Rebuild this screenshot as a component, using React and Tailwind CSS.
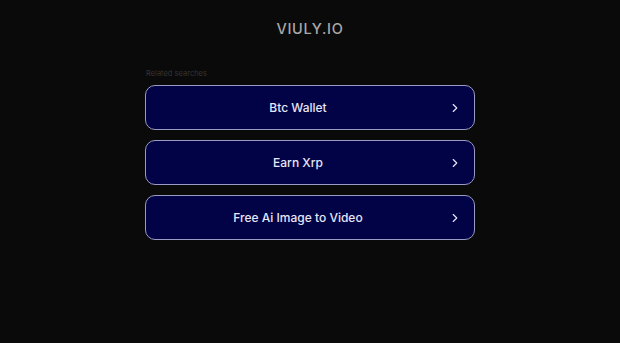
import { ChevronRight } from 'lucide-react';

const searches = ['Btc Wallet', 'Earn Xrp', 'Free Ai Image to Video'];

export default function App() {
  return (
    <div className="min-h-[343px] bg-[#0a0a0a] font-['Inter','Liberation_Sans',sans-serif]">
      <div className="pt-[19px] text-center text-[14.5px] font-medium tracking-[0.05em] text-[#a8a8a8] leading-[20px]">
        VIULY.IO
      </div>
      <div className="mx-auto mt-[30px] w-[330px]">
        <div className="mb-[6px] pl-[1px] text-[7.5px] leading-[10px] text-[#353535]">Related searches</div>
        <div className="flex flex-col gap-[10px]">
          {searches.map((s) => (
            <div
              key={s}
              className="relative flex h-[45px] items-center justify-center rounded-[10px] border border-[#9a9bc4] bg-[#020246] pr-[24px] text-[12px] font-medium text-[#e6e6f6]"
            >
              {s}
              <ChevronRight className="absolute right-[12px] h-[14px] w-[14px]" strokeWidth={2} />
            </div>
          ))}
        </div>
      </div>
    </div>
  );
}
